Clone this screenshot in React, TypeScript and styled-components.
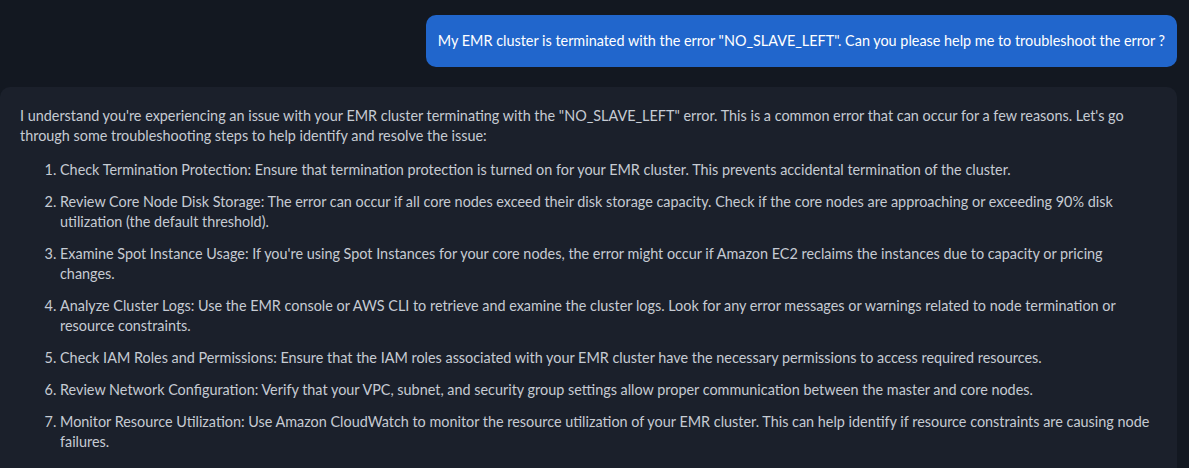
import React from "react";
import styled, { createGlobalStyle } from "styled-components";

const Global = createGlobalStyle`
  html, body { margin: 0; padding: 0; background: #131821; }
  body { font-family: Lato, "Liberation Sans", sans-serif; }
`;

const Page = styled.div`
  width: 1189px;
  height: 468px;
  overflow: hidden;
  background: #131821;
  display: flex;
  flex-direction: column;
  padding: 15px 12px 0 0;
  box-sizing: border-box;
`;

const UserRow = styled.div`
  display: flex;
  justify-content: flex-end;
`;

const Bubble = styled.div`
  background: #2166cc;
  color: #ffffff;
  font-size: 14.4px;
  line-height: 20px;
  padding: 16px 12px;
  border-radius: 10px;
  max-width: 760px;
`;

const Card = styled.div`
  margin-top: 20px;
  flex: 1;
  background: #1b202b;
  border-radius: 10px 10px 0 0;
  padding: 19px 20px 0 20px;
  color: #c6cbd3;
  font-size: 14.4px;
  line-height: 20px;
`;

const Para = styled.p`
  margin: 0 0 14px 0;
`;

const List = styled.ol`
  margin: 0;
  padding-left: 40px;
`;

const Item = styled.li`
  margin-bottom: 12px;
`;

const items = [
  "Check Termination Protection: Ensure that termination protection is turned on for your EMR cluster. This prevents accidental termination of the cluster.",
  "Review Core Node Disk Storage: The error can occur if all core nodes exceed their disk storage capacity. Check if the core nodes are approaching or exceeding 90% disk utilization (the default threshold).",
  "Examine Spot Instance Usage: If you're using Spot Instances for your core nodes, the error might occur if Amazon EC2 reclaims the instances due to capacity or pricing changes.",
  "Analyze Cluster Logs: Use the EMR console or AWS CLI to retrieve and examine the cluster logs. Look for any error messages or warnings related to node termination or resource constraints.",
  "Check IAM Roles and Permissions: Ensure that the IAM roles associated with your EMR cluster have the necessary permissions to access required resources.",
  "Review Network Configuration: Verify that your VPC, subnet, and security group settings allow proper communication between the master and core nodes.",
  "Monitor Resource Utilization: Use Amazon CloudWatch to monitor the resource utilization of your EMR cluster. This can help identify if resource constraints are causing node failures.",
];

export default function App() {
  return (
    <>
      <Global />
      <Page>
        <UserRow>
          <Bubble>
            My EMR cluster is terminated with the error "NO_SLAVE_LEFT". Can you please help me to troubleshoot the error ?
          </Bubble>
        </UserRow>
        <Card>
          <Para>
            I understand you're experiencing an issue with your EMR cluster terminating with the "NO_SLAVE_LEFT" error. This is a common error that can occur for a few reasons. Let's go through some troubleshooting steps to help identify and resolve the issue:
          </Para>
          <List>
            {items.map((t) => (
              <Item key={t}>{t}</Item>
            ))}
          </List>
        </Card>
      </Page>
    </>
  );
}
